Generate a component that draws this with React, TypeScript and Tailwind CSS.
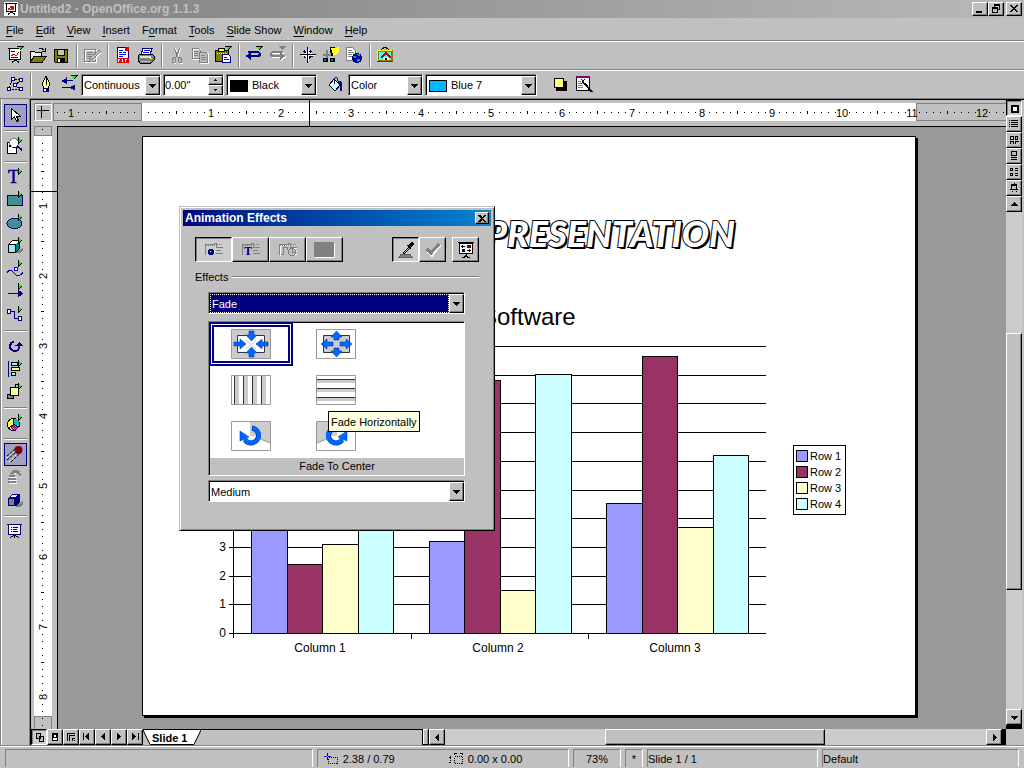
import React, { useState } from 'react';

const raised = 'bg-[#c0c0c0] border border-t-white border-l-white border-r-black border-b-black shadow-[inset_-1px_-1px_#808080]';
const pressed = 'bg-[#cccccc] border border-t-black border-l-black border-r-white border-b-white shadow-[inset_1px_1px_#808080]';
const sunken = 'bg-white border border-t-[#808080] border-l-[#808080] border-r-white border-b-white';

const INCH = 70.1;

/* ---------- Icons ---------- */

type IcoProps = { w?: number; h?: number; children: React.ReactNode };

const Ico = ({ w = 18, h = 18, children }: IcoProps) => (
    <svg width={w} height={h} viewBox={`0 0 ${w} ${h}`} fill="none" shapeRendering="crispEdges" aria-hidden="true" className="block shrink-0 overflow-visible">
        {children}
    </svg>
);

const Patterns = () => (
    <svg className="absolute w-0 h-0" aria-hidden="true">
        <defs>
            {[
                ['yellow', '#ffff00', '#ffffff'],
                ['cyan', '#00ffff', '#ffffff'],
                ['purple', '#800080', '#c060c0'],
            ].map(([id, a, b]) => (
                <pattern key={id} id={id} width="2" height="2" patternUnits="userSpaceOnUse">
                    <path d="M0 0h2v2h-2z" fill={b} />
                    <path d="M0 0h1v1h-1zM1 1h1v1h-1z" fill={a} />
                </pattern>
            ))}
        </defs>
    </svg>
);

const DownFlag = ({ off = false }) => (
    <g>
        <path d="M11 0h7v1h-1v1h-1v1h-1v1h-1v-1h-1v-1h-1v-1h-1z" fill={off ? '#808080' : '#000'} />
        {!off && <path d="M12 1h4v1h-1v1h-2v-1h-1z" fill="#00ff00" />}
    </g>
);

const RightFlag = () => (
    <g>
        <path d="M12 0h1v1h1v1h1v1h1v1h-1v1h-1v1h-1v1h-1z" fill="#000" />
        <path d="M13 1h1v1h1v2h-1v1h-1z" fill="#00ff00" />
    </g>
);

const SelectionArrow = ({ d, size = 9 }: { d: 'up' | 'down' | 'left' | 'right'; size?: number }) => {
    const paths = {
        up: 'M4 2h1v1h1v1h1v1h1v1h-7v-1h1v-1h1v-1h1z',
        down: 'M1 3h7v1h-1v1h-1v1h-1v1h-1v-1h-1v-1h-1v-1h-1z',
        left: 'M6 1v7h-1v-1h-1v-1h-1v-1h-1v-1h1v-1h1v-1h1v-1z',
        right: 'M3 1v7h1v-1h1v-1h1v-1h1v-1h-1v-1h-1v-1h-1v-1z',
    };
    return (
        <svg width={size} height={size} viewBox="0 0 9 9" shapeRendering="crispEdges" aria-hidden="true" className="block">
            <path d={paths[d]} fill="#000" />
        </svg>
    );
};

const AppIcon = () => (
    <Ico w={14} h={14}>
        <path d="M0 0h14v14H0z" fill="#fff" />
        <path d="M1 1.5h12M2.5 2v7M11.5 2v7M2 9.5h10M7.5 9v2M4.5 13v-1l3-2 3 2v1" stroke="#000" />
        <path d="M4 6h2v1H4zM6 4h4v3H7z" fill="#e00000" />
        <path d="M4 7.5h6" stroke="#008080" />
    </Ico>
);

const NewIcon = () => (
    <Ico>
        <path d="M3 3h12v10H3z" fill="#fff" />
        <path d="M2 2.5h11M3.5 3v10M14.5 5v8M3 13.5h12M9.5 13v2M6.5 17v-1l3-2 3 2v1" stroke="#000" />
        <path d="M5 9h2v1H5zM6 8h3v1H6zM9 9h2v1H9zM11 7h1v2h-1zM12 6h1v1h-1z" fill="#e00000" />
        <path d="M5 5.5h4M5 11.5h7" stroke="#000080" />
        <DownFlag />
    </Ico>
);

const OpenIcon = () => (
    <Ico>
        <path d="M1 6h5l1 1h6v3H5l-3 5H1z" fill="url(#yellow)" />
        <path d="M5 10h12l-4 6H1z" fill="#808000" />
        <path d="M1.5 16V5.5h4l1 1h6v3M4.5 10h13l-4 6h-12l3.5-6M9.5 3.5c2-2 4-1 6 1M16.5 2v3.5H13" stroke="#000" />
    </Ico>
);

const SaveIcon = () => (
    <Ico>
        <path d="M2.5 3.5h13v13h-12l-1-1z" fill="#808000" stroke="#000" />
        <path d="M5.5 3.5h7v6h-7z" fill="#c0c0c0" stroke="#000" />
        <path d="M5 12h8v4H5z" fill="#000" />
        <path d="M6 13h2v3H6z" fill="#fff" />
    </Ico>
);

const EditDocIcon = () => (
    <Ico>
        <path d="M2.5 4.5h11v12h-11z" stroke="#fff" />
        <path d="M1.5 3.5h11v12h-11zM4 6.5h6M4 8.5h5M4 10.5h4M4 12.5h3" stroke="#808080" />
        <path d="M16 4l1.5 1.5L10 13l-3 1 1-3z" fill="#c0c0c0" stroke="#808080" />
        <path d="M17.5 7L11 14" stroke="#fff" />
    </Ico>
);

const PdfIcon = () => (
    <Ico>
        <path d="M3.500 1.500h8l3 3v11h-11z" fill="#fff" stroke="#000080" />
        <path d="M11 1h4v4h-4z" fill="#e00000" />
        <path d="M5 4.5h4M5 6.5h3M9 6.5h3M5 8.5h7M5 10.5h4" stroke="#0000ff" />
        <path d="M3 12h12v5H3z" fill="#e00000" />
        <path d="M4 13h2v1H5v2H4zM8 13h1v3H8zM11 13h1v3h-1zM12 13h1v1h-1z" fill="#fff" />
    </Ico>
);

const PrintIcon = () => (
    <Ico>
        <path d="M6 2.5h9l-2 6H4z" fill="#fff" stroke="#000080" />
        <path d="M7 4.5h6M6 6.5h6" stroke="#0000ff" />
        <path d="M3 8h12l2 2v4l-3 3H3l-2-3v-4z" fill="#808080" stroke="#000" />
        <path d="M3 10h11v2H3z" fill="#e0e0e0" />
        <path d="M4 15h9" stroke="#c0c0c0" />
        <path d="M13 12h2v1h-2z" fill="#ffff00" />
    </Ico>
);

const CutIcon = () => (
    <Ico>
        <path d="M7 2l4 9M13 2l-4 9M6 17h2M12 17h3" stroke="#fff" />
        <path d="M6 2l4 9M12 2l-4 9" stroke="#808080" />
        <path d="M4.5 12.5l2-1h1v4l-1 1h-2zM10.5 11.5h1l2 1v4h-2l-1-1z" stroke="#808080" />
    </Ico>
);

const CopyIcon = () => (
    <Ico>
        <path d="M2.5 3.5h7v10h-7zM9.5 7.5h8v10h-8z" stroke="#fff" />
        <path d="M1.5 2.5h6l2 2v8h-8zM3 5.5h4M3 7.5h4M3 9.5h4" stroke="#808080" />
        <path d="M8.5 6.5h6l2 2v8h-8z" fill="#c0c0c0" stroke="#808080" />
        <path d="M10 9.5h4M10 11.5h5M10 13.5h5" stroke="#808080" />
    </Ico>
);

const PasteIcon = () => (
    <Ico>
        <path d="M1.5 4.5h13v11h-13z" fill="#808000" stroke="#000" />
        <path d="M4.5 2.5h6v3h-6z" fill="#ffff00" stroke="#000" />
        <path d="M3 7.5h9" stroke="#ffff80" strokeDasharray="1 1" />
        <path d="M8.5 8.5h6l2 2v6h-8z" fill="#fff" stroke="#000080" />
        <path d="M10 11.5h3M10 13.5h5" stroke="#0000ff" />
        <DownFlag />
    </Ico>
);

const undoPath = 'M3 5h11v1h1v1h1v3h-1v1H6v3H5v-1H4v-1H3v-1H1v-2h2V8h1V7h1V6h1v3h7V8h1V7H3z';

const UndoIcon = ({ off = false }) => (
    <Ico>
        <g transform={off ? 'matrix(-1 0 0 1 18 0)' : undefined}>
            {off && <path d={undoPath} transform="translate(-1 1)" fill="#fff" />}
            <path d={undoPath} fill={off ? '#808080' : '#000080'} />
        </g>
        <DownFlag off={off} />
    </Ico>
);

const NavigatorIcon = () => (
    <Ico>
        <path d="M5 5l7 7M12 5l-7 7" stroke="#000080" strokeWidth="2" />
        <path d="M9 1l2 6 6 2-6 2-2 6-2-6-6-2 6-2z" fill="#fff" />
        <path d="M8.5 1v16M1 8.5h16M10.5 10v3M11 10.5h3" stroke="#000" />
    </Ico>
);

const StylistIcon = () => (
    <Ico>
        <path d="M4.5 4v8M1 8.5h8" stroke="#808080" strokeWidth="2" />
        <path d="M8 1h5v3l-2 6H9V7H8z" fill="#000" />
        <path d="M9 2h3l5-1v5l-4 3h-2z" fill="url(#yellow)" />
        <path d="M1 12h5v4H1zM8 12h5v4H8z" fill="#000" />
        <path d="M2 13h2v2H2zM9 13h2v2H9z" fill="#008080" />
    </Ico>
);

const WebDocIcon = () => (
    <Ico>
        <path d="M1.5 1.5h6l3 3v10h-9z" fill="#fff" stroke="#808080" />
        <path d="M3 4.5h4M3 6.5h6M3 8.5h4M3 10.5h4" stroke="#808080" />
        <circle cx="12" cy="12" r="4.5" fill="#0000c0" stroke="#000080" />
        <path d="M8 10h3v2H9zM12 13h3v2h-2l-1 2zM12 8h3v2h-2z" fill="#00c000" />
    </Ico>
);

const GalleryIcon = () => (
    <Ico>
        <path d="M5 4l3-2.5h2L13 4" stroke="#000" />
        <path d="M1 4h16v12H1z" fill="#808000" />
        <path d="M1 4h15v1H2v11H1z" fill="#ffff00" />
        <path d="M3 6h12v8H3z" fill="#40ffff" />
        <path d="M7 11h6v3H7z" fill="#fff" />
        <path d="M5 12l5-5 5 5" stroke="#d00000" strokeWidth="2" />
        <path d="M9 12h2v2H9z" fill="#000" />
        <path d="M1 15.5h16" stroke="#c00000" />
    </Ico>
);

const EditPointsIcon = () => (
    <Ico>
        <path d="M3 13L7 4l8 1M15 5L9 10M9 10l5 4M3 14h12" stroke="#000" strokeDasharray="2 1" />
        {[[5, 2], [13, 3], [7, 8], [1, 12], [13, 12]].map(([x, y]) => (
            <path key={`${x}-${y}`} d={`M${x + 0.5} ${y + 0.5}h3v3h-3z`} fill="#fff" stroke="#000080" />
        ))}
    </Ico>
);

const PenIcon = () => (
    <Ico>
        <path d="M9 1L5 9l2 4h4l2-4z" fill="#ffff80" stroke="#000" />
        <path d="M9 3v7" stroke="#000" />
        <path d="M6 13h6v4H6z" fill="#000080" />
        <path d="M7 14h2v2H7z" fill="#fff" />
    </Ico>
);

const LineEndsIcon = () => (
    <Ico>
        <path d="M1 6h1v-1h2v-1h2v-2h1v3h6v1H7v3H6V8H4V7H2z" fill="#000080" />
        <path d="M2 12.5h8" stroke="#000080" />
        <path d="M9 12h2v-1h2v-1h2v5h-2v-1h-2v-1H9z" fill="#000080" />
        <DownFlag />
    </Ico>
);

const BucketIcon = () => (
    <Ico>
        <path d="M7 4l6 6-5 6-6-6z" fill="#c0ffff" stroke="#000" />
        <path d="M3 10l4-5 2 2-4 5z" fill="#fff" />
        <path d="M7.5 9V3.5l1-1h1l1 1V6" stroke="#000080" />
        <path d="M11 6h3l1 2v8h-2v-6l-2-2z" fill="#000080" />
    </Ico>
);

const ShadowIcon = () => (
    <Ico>
        <path d="M5 6h11v10H5z" fill="#000" />
        <path d="M3.5 3.5h9v9h-9z" fill="#ffff80" stroke="#000" />
    </Ico>
);

const WizardIcon = () => (
    <Ico>
        <path d="M2.5 1.5h13v14h-13z" fill="#fff" stroke="#000" />
        <path d="M2 1h14v2H2z" fill="#800080" />
        <path d="M4 6.5h3M4 8.5h3M4 10.5h5M4 12.5h5" stroke="#808080" />
        <path d="M7 4h4v5H7z" fill="#ffff80" />
        <path d="M7 4l4 5M11 4L7 9" stroke="#000080" />
        <path d="M10 8l8 9" stroke="#000" strokeWidth="2" />
    </Ico>
);

const PointerIcon = () => (
    <Ico>
        <path d="M5.5 2.5v11l3-3 2 5 2-1-2-4h4z" fill="#fff" stroke="#000" />
    </Ico>
);

const ZoomIcon = () => (
    <Ico>
        <path d="M1.5 5.5h9v11h-9z" fill="#fff" stroke="#000" />
        <circle cx="8" cy="6" r="4.5" fill="#fff" stroke="#808080" />
        <path d="M3 8h2v2H3zM7 10h5v1H7z" fill="#000" />
        <path d="M11 9l5 4" stroke="#000080" strokeWidth="2" />
        <RightFlag />
    </Ico>
);

const TextIcon = () => (
    <Ico>
        <text x="2" y="15" fontSize="18" fontFamily="Liberation Serif, serif" fill="#000080" stroke="#000080" strokeWidth="0.5">T</text>
        <RightFlag />
    </Ico>
);

const RectIcon = () => (
    <Ico>
        <path d="M1.5 4.5h15v10h-15z" fill="#409090" stroke="#000080" />
        <RightFlag />
    </Ico>
);

const EllipseIcon = () => (
    <Ico>
        <ellipse cx="8.5" cy="9.5" rx="7.5" ry="5" fill="#409090" stroke="#000080" />
        <RightFlag />
    </Ico>
);

const CubeIcon = () => (
    <Ico>
        <path d="M8 16h6l3-3v-2z" fill="#808080" />
        <path d="M2.5 7.5l4-4h7v8l-4 4h-7z" fill="#fff" stroke="#000" />
        <path d="M2.5 7.5h7v8h-7z" fill="#a0e8e8" stroke="#000" />
        <path d="M10 7l3-3v7l-3 3z" fill="#008080" />
        <RightFlag />
    </Ico>
);

const CurveIcon = () => (
    <Ico>
        <path d="M1 13c2-4 5-3 7 0s6 4 9-1M8 11l5-5" stroke="#000080" />
        <path d="M8.5 7.5h3v3h-3z" fill="#fff" stroke="#0000ff" />
        <RightFlag />
    </Ico>
);

const ArrowIcon = () => (
    <Ico>
        <path d="M2 10.5h11" stroke="#000080" />
        <path d="M12 7h1v1h2v1h1v1h1v1h-1v1h-1v1h-2v1h-1z" fill="#000080" />
        <RightFlag />
    </Ico>
);

const ConnectorIcon = () => (
    <Ico>
        <path d="M5 5.5h3.5v7H13" stroke="#000080" />
        <path d="M1.5 3.5h3v4h-3zM12.5 10.5h3v4h-3z" fill="#fff" stroke="#000080" />
        <RightFlag />
    </Ico>
);

const RotateIcon = () => (
    <Ico>
        <path d="M8 4H6v1H4v2H3v5h1v1h1v1h2v1h4v-1h2v-2h1V9h3V8h-1V7h-1V6h-1V5h-1v1h-1v1h-1v1H9v1h3v3h-1v1H7v-1H6v-1H5V8h1V6h2z" fill="#000080" />
    </Ico>
);

const AlignIcon = () => (
    <Ico>
        <path d="M2.5 1v16" stroke="#000080" />
        <path d="M5.5 2.5h6v3h-6zM5.5 12.5h4v3h-4z" fill="#80ffff" stroke="#000" />
        <path d="M5.5 7.5h8v3h-8z" fill="#ffff80" stroke="#000" />
        <RightFlag />
    </Ico>
);

const ArrangeIcon = () => (
    <Ico>
        <path d="M1.5 11.5h6v4h-6z" fill="#808080" stroke="#000" />
        <path d="M4.5 4.5h8v8h-8z" fill="#ffffa0" stroke="#000" />
        <path d="M9.5 4V1.5h2" stroke="#000" />
        <RightFlag />
    </Ico>
);

const PieIcon = () => (
    <Ico>
        <circle cx="7.5" cy="10.5" r="6" fill="#ffff60" stroke="#000" />
        <path d="M8 10V5a5 5 0 0 1 5 7z" fill="#00c0c0" />
        <path d="M8 11l5 2c-2 4-6 4-9 1z" fill="url(#purple)" />
        <path d="M7.5 5v5l5 3M7.5 10.5L3 14" stroke="#000" />
        <RightFlag />
    </Ico>
);

const CometIcon = () => (
    <Ico>
        <g shapeRendering="auto">
            <path d="M1 11l8-7M1 15l9-8M5 17l9-9" stroke="#000" strokeDasharray="3 1" />
            <path d="M1 13l8-7M3 17l8-8" stroke="#fff" strokeDasharray="2 2" />
            <circle cx="12.5" cy="5" r="4" fill="#800000" />
        </g>
    </Ico>
);

const InteractionIcon = () => (
    <Ico>
        <path d="M6 5.5h4M3 9.5h8M3 12.5h8M3 15.5h8M14.5 4v5" stroke="#fff" />
        <path d="M5 4h1V3h1V2h5v1h2v2h1v3h-2V6h-2V5H8v1H4V5h1zM3 7h6v2H3zM2 10h8v2H2zM2 13h8v2H2z" fill="#808080" />
    </Ico>
);

const Cube3DIcon = () => (
    <Ico>
        <path d="M9 16h5l3-3v-3z" fill="#808080" />
        <path d="M2 7l4-4h8v8l-4 4H2z" fill="#000080" />
        <path d="M3 8h5v6H3z" fill="#808080" />
        <path d="M4 6l3-2h5L9 6z" fill="#fff" />
    </Ico>
);

const PresentationIcon = () => (
    <Ico>
        <path d="M3 3h12v9H3z" fill="#fff" />
        <path d="M1 2.5h15M2.5 3v9M14.5 3v9M2 12.5h13" stroke="#000080" />
        <path d="M5 5.5h1M7 5.5h5M5 7.5h1M7 7.5h4M5 9.5h1M7 9.5h5M8.5 13v3M4 15.5h1M5 14.5h2M10 14.5h2M12 15.5h1M7 13.5h3" stroke="#000" />
    </Ico>
);

/* ---------- Shared controls ---------- */

const Sep = () => (
    <span className="w-2 h-[23px] flex justify-center" aria-hidden="true">
        <span className="w-0.5 border-l border-[#808080] bg-white" />
    </span>
);

const ToolButton = ({ label, active = false, children }: { label: string; active?: boolean; children: React.ReactNode }) => (
    <button
        aria-label={label}
        className={`w-[23px] h-[23px] shrink-0 flex items-start justify-start ${active ? 'border border-[#000080] bg-[#a0a0c0] pl-px pt-px' : 'pl-0.5 pt-0.5'}`}
    >
        {children}
    </button>
);

type ComboProps = { label: string; value: string; className?: string; swatch?: string; highlight?: boolean };

const Combo = ({ label, value, className = '', swatch, highlight = false }: ComboProps) => (
    <div className={`${sunken} flex h-[22px] shadow-[inset_1px_1px_#000] pt-px pl-px ${className}`}>
        {swatch && <span className="w-[18px] h-3 border border-black ml-0.5 mt-1 shrink-0" style={{ backgroundColor: swatch }} />}
        <select
            aria-label={label}
            defaultValue={value}
            className={`appearance-none flex-1 min-w-0 outline-none ${swatch ? 'pl-1' : 'pl-px'} ${highlight ? 'bg-[#000080] text-white border border-dotted border-white pl-0' : 'bg-transparent'}`}
        >
            <option>{value}</option>
        </select>
        <span className={`${raised} w-[15px] shrink-0 flex items-center justify-center pointer-events-none`}>
            <SelectionArrow d="down" />
        </span>
    </div>
);

/* ---------- Top bars ---------- */

const menus = ['File', 'Edit', 'View', 'Insert', 'Format', 'Tools', 'Slide Show', 'Window', 'Help'];
const accel: Record<string, number> = { Format: 1 };

const TitleBar = () => (
    <header className="h-[18px] flex items-center justify-between pl-1 pr-0.5 bg-linear-to-r from-[#808080] to-[#b9b9b9]">
        <div className="flex items-center gap-0.5">
            <AppIcon />
            <h1 className="text-xs font-bold text-[#c0c0c0]">Untitled2 - OpenOffice.org 1.1.3</h1>
        </div>
        <div className="flex">
            <button aria-label="Minimize" className={`${raised} w-4 h-3.5`}>
                <Ico w={14} h={12}><path d="M3 8h6v2H3z" fill="#000" /></Ico>
            </button>
            <button aria-label="Restore" className={`${raised} w-4 h-3.5`}>
                <Ico w={14} h={12}>
                    <path d="M5 1.5h6M5.5 2v2M10.5 2v5M9 6.5h2M3 4.5h6M3 5.5h6M3.5 5v5M8.5 5v5M3 9.5h6M5 2.5h6" stroke="#000" />
                </Ico>
            </button>
            <button aria-label="Close" className={`${raised} w-4 h-3.5 ml-0.5`}>
                <Ico w={14} h={12}><path d="M3 2h2v1h1v1h2V3h1V2h2v1h-1v1H9v1H8v1h1v1h1v1h1v1H9V8H8V7H6v1H5v1H3V8h1V7h1V6h1V5H5V4H4V3H3z" fill="#000" /></Ico>
            </button>
        </div>
    </header>
);

const MenuBar = () => (
    <nav className="h-6 flex items-center gap-3 pl-1.5 border-b border-white shadow-[inset_0_-1px_#808080]">
        {menus.map(m => {
            const i = accel[m] ?? 0;
            return (
                <button key={m}>
                    {m.slice(0, i)}<u className="underline-offset-2">{m[i]}</u>{m.slice(i + 1)}
                </button>
            );
        })}
    </nav>
);

const FunctionBar = () => (
    <div className="h-[29px] flex items-start pt-0.5 pl-1 border-b border-white shadow-[inset_0_-1px_#808080]">
        <ToolButton label="New"><NewIcon /></ToolButton>
        <ToolButton label="Open"><OpenIcon /></ToolButton>
        <ToolButton label="Save"><SaveIcon /></ToolButton>
        <Sep />
        <ToolButton label="Edit File"><EditDocIcon /></ToolButton>
        <Sep />
        <ToolButton label="Export as PDF"><PdfIcon /></ToolButton>
        <ToolButton label="Print"><PrintIcon /></ToolButton>
        <Sep />
        <ToolButton label="Cut"><CutIcon /></ToolButton>
        <ToolButton label="Copy"><CopyIcon /></ToolButton>
        <ToolButton label="Paste"><PasteIcon /></ToolButton>
        <Sep />
        <ToolButton label="Undo"><UndoIcon /></ToolButton>
        <ToolButton label="Redo"><UndoIcon off /></ToolButton>
        <Sep />
        <ToolButton label="Navigator"><NavigatorIcon /></ToolButton>
        <ToolButton label="Stylist"><StylistIcon /></ToolButton>
        <ToolButton label="Hyperlink"><WebDocIcon /></ToolButton>
        <Sep />
        <ToolButton label="Gallery"><GalleryIcon /></ToolButton>
    </div>
);

const ObjectBar = () => (
    <div className="h-7 flex items-center pl-1 border-b border-[#808080]">
        <ToolButton label="Edit Points"><EditPointsIcon /></ToolButton>
        <Sep />
        <ToolButton label="Line"><PenIcon /></ToolButton>
        <ToolButton label="Arrow Style"><LineEndsIcon /></ToolButton>
        <div className="flex gap-0.5">
            <Combo label="Line Style" value="Continuous" className="w-20" />
            <div className={`${sunken} flex h-[22px] w-[61px] shadow-[inset_1px_1px_#000] pt-px pl-px`}>
                <input aria-label="Line Width" defaultValue={'0.00"'} className="flex-1 min-w-0 outline-none bg-transparent" />
                <span className="w-[15px] flex flex-col">
                    <button aria-label="Increase" className={`${raised} flex-1 flex items-center justify-center`}><SelectionArrow d="up" size={5} /></button>
                    <button aria-label="Decrease" className={`${raised} flex-1 flex items-center justify-center`}><SelectionArrow d="down" size={5} /></button>
                </span>
            </div>
            <Combo label="Line Color" value="Black" swatch="#000000" className="w-[91px]" />
        </div>
        <div className="flex items-center pl-2">
            <ToolButton label="Area"><BucketIcon /></ToolButton>
        </div>
        <div className="flex gap-0.5">
            <Combo label="Area Style" value="Color" className="w-[75px]" />
            <Combo label="Fill Color" value="Blue 7" swatch="#00b8ff" className="w-28" />
        </div>
        <div className="flex items-center pl-3">
            <ToolButton label="Shadow"><ShadowIcon /></ToolButton>
            <ToolButton label="Presentation Box"><WizardIcon /></ToolButton>
        </div>
    </div>
);

/* ---------- Left toolbar ---------- */

const toolGroups: { label: string; icon: React.FC; active?: boolean }[][] = [
    [{ label: 'Select', icon: PointerIcon, active: true }],
    [{ label: 'Zoom', icon: ZoomIcon }],
    [
        { label: 'Text', icon: TextIcon },
        { label: 'Rectangle', icon: RectIcon },
        { label: 'Ellipse', icon: EllipseIcon },
        { label: '3D Objects', icon: CubeIcon },
        { label: 'Curve', icon: CurveIcon },
        { label: 'Lines and Arrows', icon: ArrowIcon },
        { label: 'Connector', icon: ConnectorIcon },
    ],
    [
        { label: 'Rotate', icon: RotateIcon },
        { label: 'Alignment', icon: AlignIcon },
        { label: 'Arrange', icon: ArrangeIcon },
    ],
    [{ label: 'Insert', icon: PieIcon }],
    [
        { label: 'Animation Effects', icon: CometIcon, active: true },
        { label: 'Interaction', icon: InteractionIcon },
        { label: '3D Controller', icon: Cube3DIcon },
    ],
    [{ label: 'Slide Show', icon: PresentationIcon }],
];

const MainToolbar = () => (
    <aside className="w-[31px] shrink-0 pt-[5px] pl-[3px] border-l border-l-[#808080] border-r border-r-black shadow-[inset_1px_0_#fff,inset_-1px_0_#808080]">
        {toolGroups.map((group, i) => (
            <div key={group[0].label}>
                {i > 0 && <div className="h-2 w-[23px] pt-[3px]"><div className="h-0.5 border-t border-[#808080] bg-white" /></div>}
                {group.map(t => (
                    <ToolButton key={t.label} label={t.label} active={t.active}><t.icon /></ToolButton>
                ))}
            </div>
        ))}
    </aside>
);

/* ---------- Rulers ---------- */

// One scale for both directions: dots every tenth, a dash on the half, a number on the inch
const Scale = ({ zero, from, to, vertical = false }: { zero: number; from: number; to: number; vertical?: boolean }) => {
    const marks: React.ReactNode[] = [];
    for (let t = from; t <= to; t++) {
        if (t === 0) continue;
        const p = Math.round(zero + (t * INCH) / 10);
        if (t % 10 === 0) {
            marks.push(
                vertical
                    ? <text key={t} transform={`translate(13 ${p}) rotate(-90)`} textAnchor="middle">{Math.abs(t / 10)}</text>
                    : <text key={t} x={p} y={14} textAnchor="middle">{Math.abs(t / 10)}</text>
            );
        } else {
            const len = t % 5 === 0 ? 3 : 1;
            const o = t % 5 === 0 ? 8 : 9;
            marks.push(vertical
                ? <rect key={t} x={o - 1} y={p} width={len} height={1} />
                : <rect key={t} x={p} y={o} width={1} height={len} />);
        }
    }
    return (
        <svg className="absolute inset-0 w-full h-full text-[11px]" fill="#000" shapeRendering="crispEdges" aria-hidden="true">
            {marks}
        </svg>
    );
};

const HorizontalRuler = () => (
    <div className="relative h-[26px] pt-[3px] pl-[3px] flex gap-px">
        <div className="w-[18px] h-[18px] border border-[#808080] border-r-white border-b-white shadow-[inset_1px_1px_#fff]">
            <Ico w={16} h={16}><path d="M2 6.5h12M6.5 2v12" stroke="#000" /></Ico>
        </div>
        <div className="relative flex-1 h-[18px] flex overflow-hidden">
            <div className="w-[89px] shrink-0 border border-[#808080]" />
            <div className="w-[774px] shrink-0 bg-white" />
            <div className="flex-1 border border-r-0 border-[#808080]" />
            <Scale zero={88} from={-12} to={123} />
        </div>
        <div className="absolute left-[278px] inset-y-0 w-px bg-black" />
    </div>
);

const VerticalRuler = () => (
    <div className="relative w-[26px] pl-[3px] shrink-0">
        <div className="relative w-[18px] h-full flex flex-col overflow-hidden">
            <div className="h-2.5 shrink-0 border border-[#808080]" />
            <div className="h-[580px] shrink-0 bg-white" />
            <div className="flex-1 border border-b-0 border-[#808080]" />
            <Scale zero={10} from={-1} to={84} vertical />
        </div>
        <div className="absolute top-[65px] inset-x-0 h-px bg-black" />
    </div>
);

/* ---------- Slide ---------- */

const series = [
    { name: 'Row 1', color: '#9999ff', values: [9.1, 3.2, 4.54] },
    { name: 'Row 2', color: '#993366', values: [2.4, 8.8, 9.65] },
    { name: 'Row 3', color: '#ffffcc', values: [3.1, 1.5, 3.7] },
    { name: 'Row 4', color: '#ccffff', values: [4.3, 9.02, 6.2] },
];

const Chart = () => {
    const left = 20;
    const base = 296;
    const unit = 28.7;
    const group = 177.7;
    const y = (v: number) => Math.round(base - v * unit);
    return (
        <svg width="560" height="325" className="absolute left-[70px] top-[200px] text-xs" shapeRendering="crispEdges" role="img" aria-label="Software chart">
            {Array.from({ length: 11 }, (_, v) => (
                <g key={v}>
                    <rect x={left - 4} y={y(v)} width={537} height={1} fill="#000" />
                    <text x={13} y={y(v) + 4} textAnchor="end">{v}</text>
                </g>
            ))}
            <rect x={left} y={9} width={1} height={292} fill="#000" />
            {[0, 1, 2].map(c => (
                <g key={c}>
                    {c > 0 && <rect x={Math.round(left + c * group)} y={base} width={1} height={6} fill="#000" />}
                    <text x={Math.round(left + (c + 0.5) * group - 2)} y={315} textAnchor="middle">Column {c + 1}</text>
                    {series.map((s, i) => {
                        const x = Math.round(38 + c * group + i * 35.5);
                        const next = Math.round(38 + c * group + (i + 1) * 35.5);
                        const top = y(s.values[c]);
                        return <rect key={s.name} x={x + 0.5} y={top + 0.5} width={next - x} height={base - top} fill={s.color} stroke="#000" />;
                    })}
                </g>
            ))}
        </svg>
    );
};

const Slide = () => (
    <div className="relative w-[774px] h-[580px] shrink-0 bg-white border border-black shadow-[2px_2px_#000]">
        <h2 className="absolute right-[180px] top-[74px] font-[Lato] font-black italic text-4xl leading-[44px] text-white [-webkit-text-stroke:2px_black] [paint-order:stroke_fill] [text-shadow:1px_1px_#000,2px_2px_#000]">
            PRESENTATION
        </h2>
        <p className="absolute left-[338px] top-[168px] text-2xl leading-6">Software</p>
        <Chart />
        <ul className="absolute left-[650px] top-[308px] w-[53px] border border-black pl-0.5 py-0.5">
            {series.map(s => (
                <li key={s.name} className="flex items-center gap-0.5 h-4 whitespace-nowrap">
                    <span className="w-3 h-3 border border-black" style={{ backgroundColor: s.color }} />
                    {s.name}
                </li>
            ))}
        </ul>
    </div>
);

/* ---------- Scroll bars ---------- */

const viewIcons: [string, React.ReactNode][] = [
    ['Drawing View', <path key="p" d="M5 5h6v6H5z" fill="#fff" stroke="#000" strokeWidth="2" />],
    ['Outline View', <path key="p" d="M2 3.5h1M2 5.5h1M2 7.5h1M2 9.5h1M4 3.5h7M4 5.5h7M4 7.5h7M4 9.5h7" stroke="#000" />],
    ['Slides View', <path key="p" d="M3.5 3.5h3v3h-3zM8.5 3.5h2v3h-2zM3.5 11V8.5h3V11M8.5 11V8.5h3" stroke="#000" />],
    ['Notes View', <path key="p" d="M4.5 2.5h5v4h-5zM4 8.5h6M4 10.5h6" stroke="#000" />],
    ['Handout View', <path key="p" d="M3.5 3.5h2v2h-2zM3.5 8.5h2v2h-2zM8 3.5h3M8 5.5h3M8 8.5h3M8 10.5h3" stroke="#000" />],
    ['Start Slide Show', <path key="p" d="M7.5 2v1M4.5 3.5h5v5h-5zM5 4.5h5M3 8.5h2M9 8.5h2M5 10.5h1M9 10.5h1" stroke="#000" />],
];

const VerticalScroll = () => (
    <div className="w-4 mr-0.5 shrink-0 flex flex-col bg-[#cccccc]">
        {viewIcons.map(([label, icon], i) => (
            <button key={label} aria-label={label} className={`${i === 0 ? pressed : raised} h-4 w-4 shrink-0`}>
                <Ico w={14} h={14}>{icon}</Ico>
            </button>
        ))}
        <button aria-label="Scroll up" className={`${raised} h-4 shrink-0 flex items-center justify-center`}><SelectionArrow d="up" /></button>
        <div className="flex-[121]" />
        <div className={`${raised} flex-[257]`} />
        <div className="flex-[119]" />
        <button aria-label="Scroll down" className={`${raised} h-4 shrink-0 flex items-center justify-center`}><SelectionArrow d="down" /></button>
        <div className="h-1 bg-black shrink-0" />
    </div>
);

const tabButtons: [string, React.ReactNode][] = [
    ['Slide Mode', <path key="p" d="M4.5 3.5h4v5h-4zM7.5 6.5h4v5h-4z" fill="#c0c0c0" stroke="#000" />],
    ['Master Mode', <path key="p" d="M4.5 3.5h5v7h-5zM5.5 4.5h3v3h-3z" fill="#fff" stroke="#000" />],
    ['Layer Mode', <path key="p" d="M3.5 11V3.5H11M5.5 11V5.5H11M8 11V8.5h3M10 11v-1" stroke="#000" />],
    ['First Slide', <path key="p" d="M3 3h1v7H3zM9 3v7H8V9H7V8H6V7H5V6h1V5h1V4h1V3z" fill="#000" />],
    ['Previous Slide', <path key="p" d="M9 3v7H8V9H7V8H6V7H5V6h1V5h1V4h1V3z" fill="#000" />],
    ['Next Slide', <path key="p" d="M5 3v7h1V9h1V8h1V7h1V6H8V5H7V4H6V3z" fill="#000" />],
    ['Last Slide', <path key="p" d="M10 3h1v7h-1zM4 3v7h1V9h1V8h1V7h1V6H7V5H6V4H5V3z" fill="#000" />],
];

const BottomBar = () => (
    <div className="h-4 flex">
        {tabButtons.map(([label, icon], i) => (
            <button key={label} aria-label={label} className={`${i === 0 ? pressed : raised} w-4 h-4 shrink-0`}>
                <Ico w={14} h={14}>{icon}</Ico>
            </button>
        ))}
        <div className="w-[279px] shrink-0 flex border-t border-black">
            <button className="relative w-[58px] h-[15px] pl-[9px] text-left font-bold">
                <svg width="58" height="15" viewBox="0 0 58 15" className="absolute inset-0" aria-hidden="true">
                    <path d="M0 -1h58l-7 15.500H7z" fill="#fff" />
                    <path d="M0 0l7 14.500h44L58 0" fill="none" stroke="#000" />
                </svg>
                <span className="relative">Slide 1</span>
            </button>
        </div>
        <div className="w-[7px] shrink-0 bg-[#c0c0c0] border-x border-black shadow-[inset_1px_1px_#fff,inset_-1px_0_#808080] border-b" />
        <button aria-label="Scroll left" className={`${raised} w-4 shrink-0 flex items-center justify-center`}><SelectionArrow d="left" /></button>
        <div className="flex-1 flex bg-[#cccccc]">
            <div className="flex-[160]" />
            <div className={`${raised} flex-[219]`} />
            <div className="flex-[161]" />
        </div>
        <button aria-label="Scroll right" className={`${raised} w-4 shrink-0 flex items-center justify-center`}><SelectionArrow d="right" /></button>
        <div className="w-1 bg-black mr-[18px]" />
    </div>
);

/* ---------- Status bar ---------- */

const panel = 'h-full border-t border-l border-[#808080] border-r border-r-white flex items-center whitespace-nowrap';

const StatusBar = () => (
    <footer className="h-[23px] shrink-0 border-t border-[#808080] shadow-[inset_0_1px_#fff] pt-[3px] pb-px pl-[5px] pr-[5px] flex gap-1">
        <div className={`${panel} flex-[309]`} />
        <div className={`${panel} flex-[253]`}>
            <span className="w-1/2 pl-1.5 flex items-center gap-1">
                <Ico w={15} h={14}>
                    <path d="M0 4.5h8M3.500 1v8" stroke="#0000c0" strokeDasharray="3 1" />
                    <path d="M4.5 5.5h9v6h-9z" stroke="#000" strokeDasharray="1 1" />
                </Ico>
                2.38 / 0.79
            </span>
            <span className="w-1/2 pl-1.5 flex items-center gap-1">
                <Ico w={15} h={14}>
                    <path d="M5.5 4.5h8v7h-8zM1.5 4v8" stroke="#000" strokeDasharray="1 1" />
                    <path d="M5 1.5h3M11 1.5h3M5.5 1v2M13.5 1v2M0 5.5h2M0 10.5h2" stroke="#000" />
                </Ico>
                0.00 x 0.00
            </span>
        </div>
        <div className={`${panel} w-12 justify-center`}>73%</div>
        <div className={`${panel} w-[18px] justify-center`}>*</div>
        <div className={`${panel} flex-[171]`}>Slide 1 / 1</div>
        <div className={`${panel} flex-[197]`}>Default</div>
    </footer>
);

/* ---------- Animation Effects ---------- */

// Points right, tip at the origin
const arrowPath = 'M0 0l-6-5v3h-6v4h6v3z';

const BlueArrow = ({ x, y, r = 0 }: { x: number; y: number; r?: number }) => (
    <path d={arrowPath} transform={`translate(${x} ${y}) rotate(${r})`} fill="#0066ff" stroke="#003cb4" strokeWidth="0.6" />
);

const Thumb = ({ bg = '#fff', children }: { bg?: string; children: React.ReactNode }) => (
    <svg width="40" height="30" viewBox="0 0 40 30" fill="none" aria-hidden="true">
        <path d="M.5.5h39v29H.5z" fill={bg} stroke="#999" />
        {children}
    </svg>
);

const RotateThumb = ({ flip = false }) => (
    <Thumb>
        <g transform={flip ? 'matrix(-1 0 0 1 40 0)' : undefined}>
            <path d="M19 1h20v21l-12-5-8-3z" fill="#ccc" />
            <path d="M27 17l12 5" stroke="#999" />
            <circle cx="20" cy="14" r="6" fill="#fff" />
            <path d="M19 1h7v14h-7z" fill="#ccc" />
            <path d="M21 7a7.5 7.5 0 1 1-7 12" stroke="#003cb4" strokeWidth="5" />
            <path d="M22 7a7.5 7.5 0 1 1-8 11" stroke="#0066ff" strokeWidth="4" />
            <path d="M9 10v10l9-4z" fill="#0066ff" stroke="#003cb4" strokeWidth="0.6" />
        </g>
    </Thumb>
);

const effects: [string, React.ReactNode][] = [
    ['Fade To Center', (
        <Thumb bg="#ccc">
            <path d="M6.5 6.5h27v17h-27z" fill="#fff" stroke="#333" />
            <path d="M15 11l10 9M25 11l-10 9" stroke="#ccc" />
            <BlueArrow x={15} y={15} />
            <BlueArrow x={25} y={15} r={180} />
            <path d="M18 2h5v4h3l-5.5 6L15 6h3zM18 28h5v-4h3l-5.5-6-5.5 6h3z" fill="#0066ff" stroke="#003cb4" strokeWidth="0.6" />
        </Thumb>
    )],
    ['Fade From Center', (
        <Thumb>
            <path d="M7.5 6.5h26v17h-26z" fill="#ccc" stroke="#333" />
            <BlueArrow x={5} y={15} r={180} />
            <BlueArrow x={36} y={15} />
            <path d="M20.5 2l5.5 6h-3v3h-5V8h-3zM20.5 28l5.5-6h-3v-3h-5v3h-3z" fill="#0066ff" stroke="#003cb4" strokeWidth="0.6" />
        </Thumb>
    )],
    ['Fade Vertically', (
        <Thumb>
            {[3, 12, 21, 30].map(x => (
                <g key={x}>
                    <path d={`M${x + 1} 1h4v28h-4z`} fill="#ccc" />
                    <path d={`M${x + 0.5} 1v28`} stroke="#333" />
                </g>
            ))}
        </Thumb>
    )],
    ['Fade Horizontally', (
        <Thumb>
            {[4, 13, 22].map(y => (
                <g key={y}>
                    <path d={`M1 ${y + 1}h38v3H1z`} fill="#ccc" />
                    <path d={`M1 ${y + 0.5}h38`} stroke="#333" />
                </g>
            ))}
        </Thumb>
    )],
    ['Clockwise', <RotateThumb key="cw" />],
    ['Counterclockwise', <RotateThumb key="ccw" flip />],
];

const DocLines = ({ off = false }) => (
    <g>
        {off && <path d="M2.5 15V4.500h9M13 7.5h6M13 10.5h6M13 13.5h6" stroke="#fff" />}
        <path d="M1.5 14V3.5h9v-1h2v4h6" stroke="#808080" />
        <path d="M2 4.5h10M13 3.5h5" stroke="#808080" strokeDasharray="1 1" />
        {!off && <path d="M12 9.5h5M12 12.5h7" stroke="#808080" />}
    </g>
);

const categories: [string, React.ReactNode][] = [
    ['Effects', (
        <Ico w={20}>
            <DocLines />
            <circle cx="7" cy="11" r="3" fill="#000080" />
            <path d="M6 10h1v1H6z" fill="#fff" />
        </Ico>
    )],
    ['Text Effects', (
        <Ico w={20}>
            <DocLines />
            <text x="3" y="14" fontSize="12" fontFamily="Liberation Serif, serif" fontWeight="bold" fill="#000080">T</text>
        </Ico>
    )],
    ['Extras', (
        <Ico w={20}>
            <DocLines off />
            <path d="M5.5 13V6.5h4v2M3 13.5h3" stroke="#808080" />
            <circle cx="14" cy="11" r="3.5" fill="#c0c0c0" stroke="#808080" />
            <path d="M14.5 8v3h2" stroke="#808080" />
        </Ico>
    )],
    ['Order', <Ico key="o" w={22}><path d="M1 2h20v15H1z" fill="#fff" /><path d="M0 1h20v15H0z" fill="#808080" /></Ico>],
];

const AnimationDialog = () => {
    const [selected, setSelected] = useState('Fade To Center');

    return (
        <section
            role="dialog"
            aria-label="Animation Effects"
            className="absolute left-[179px] top-[206px] w-[316px] bg-[#c0c0c0] border border-t-[#c0c0c0] border-l-[#c0c0c0] border-r-black border-b-black shadow-[inset_1px_1px_#fff,inset_-1px_-1px_#808080] p-[3px]"
        >
            <div className="h-4 flex items-center justify-between pl-0.5 pr-0.5 bg-linear-to-r from-[#000080] to-[#1084d0]">
                <h2 className="text-xs font-bold text-white">Animation Effects</h2>
                <button aria-label="Close" className={`${raised} w-3.5 h-3 flex items-center justify-center`}>
                    <Ico w={8} h={7}><path d="M0 0h2l2 2 2-2h2L5 3.500 8 7H6L4 5 2 7H0l3-3.500z" fill="#000" /></Ico>
                </button>
            </div>

            <div className="px-3 pt-[11px] pb-[25px]">
                <div className="flex justify-between">
                    <div className="flex">
                        {categories.map(([label, icon], i) => (
                            <button key={label} aria-label={label} className={`${i === 0 ? pressed : raised} w-[37px] h-[25px] flex items-center justify-center`}>
                                {icon}
                            </button>
                        ))}
                    </div>
                    <div className="flex">
                        <button aria-label="Automatic Update" className={`${pressed} w-[27px] h-[25px] flex items-center justify-center`}>
                            <Ico>
                                <path d="M6 12l6-6 1 1-6 6H6z" fill="#c0c0c0" stroke="#000" />
                                <path d="M10 4h2l2-3h2v1h1v2l-3 2v2h-1L10 5z" fill="#000" />
                                <path d="M4 13.5h9l2 2.500H2z" fill="#808080" stroke="#606060" />
                            </Ico>
                        </button>
                        <button aria-label="Assign" className={`${raised} w-[27px] h-[25px] flex items-center justify-center`}>
                            <Ico>
                                <path d="M4 10l4 4 8-10" stroke="#fff" strokeWidth="3" />
                                <path d="M3 8l4 4 8-9" stroke="#808080" strokeWidth="3" />
                            </Ico>
                        </button>
                        <button aria-label="Preview" className={`${raised} w-[27px] h-[25px] ml-1.5 flex items-center justify-center`}>
                            <Ico>
                                <path d="M2.5 2.5h13v10h-13z" fill="#fff" stroke="#000" />
                                <path d="M1 1.5h16M4 5.5h4M5.5 4v3M10 9.5h4M12.5 8v3M9.500 13v2M5 16.5h2l2-2 2 2h2" stroke="#000" />
                                <path d="M10 4h4v3h-4z" fill="#800000" />
                                <path d="M5 8h3v3H5z" fill="#000080" />
                            </Ico>
                        </button>
                    </div>
                </div>

                <div className="mt-[7px] h-4 flex items-center gap-1">
                    <span>Effects</span>
                    <span className="flex-1 h-0.5 border-t border-[#808080] bg-white" />
                </div>

                <div className="pl-[13px] pr-3.5 pt-[7px]">
                    <Combo label="Effect category" value="Fade" highlight />

                    <div className={`${sunken} mt-[7px] shadow-[inset_1px_1px_#000]`}>
                        <div className="relative grid grid-cols-[repeat(3,84px)] gap-x-px gap-y-0.5">
                            {effects.map(([label, icon], i) => (
                                <button
                                    key={label}
                                    aria-label={label}
                                    aria-pressed={selected === label}
                                    onClick={() => setSelected(label)}
                                    className={`h-11 flex items-center justify-center ${i % 2 === 0 ? 'col-start-1' : ''} ${selected === label ? 'border-2 border-[#000080] shadow-[inset_0_0_0_1px_#fff,inset_0_0_0_3px_#000080]' : ''}`}
                                >
                                    {icon}
                                </button>
                            ))}
                            <div role="tooltip" className="absolute left-[119px] top-[89px] h-[21px] px-0.5 flex items-center bg-[#ffffe1] border border-black whitespace-nowrap">
                                Fade Horizontally
                            </div>
                        </div>
                        <p className="h-[17px] ml-px leading-[17px] bg-[#c0c0c0] text-center">{selected}</p>
                    </div>

                    <Combo label="Speed" value="Medium" className="mt-1" />
                </div>
            </div>
        </section>
    );
};

export default function App() {
    return (
        <div className="relative h-screen flex flex-col overflow-hidden bg-[#c0c0c0] text-black text-[11px] leading-[14px] font-['Liberation_Sans',Arial,sans-serif]">
            <Patterns />
            <TitleBar />
            <MenuBar />
            <FunctionBar />
            <ObjectBar />

            <div className="flex-1 min-h-0 flex">
                <MainToolbar />
                <div className="flex-1 min-w-0 flex flex-col border-t border-black">
                    <div className="flex-1 min-h-0 flex">
                        <div className="flex-1 min-w-0 flex flex-col">
                            <HorizontalRuler />
                            <div className="flex-1 min-h-0 flex">
                                <VerticalRuler />
                                <main className="flex-1 min-w-0 overflow-hidden bg-[#999999] border-t border-l border-black pl-[84px] pt-[9px]">
                                    <Slide />
                                </main>
                            </div>
                        </div>
                        <VerticalScroll />
                    </div>
                    <BottomBar />
                </div>
            </div>

            <StatusBar />
            <AnimationDialog />
        </div>
    );
}
